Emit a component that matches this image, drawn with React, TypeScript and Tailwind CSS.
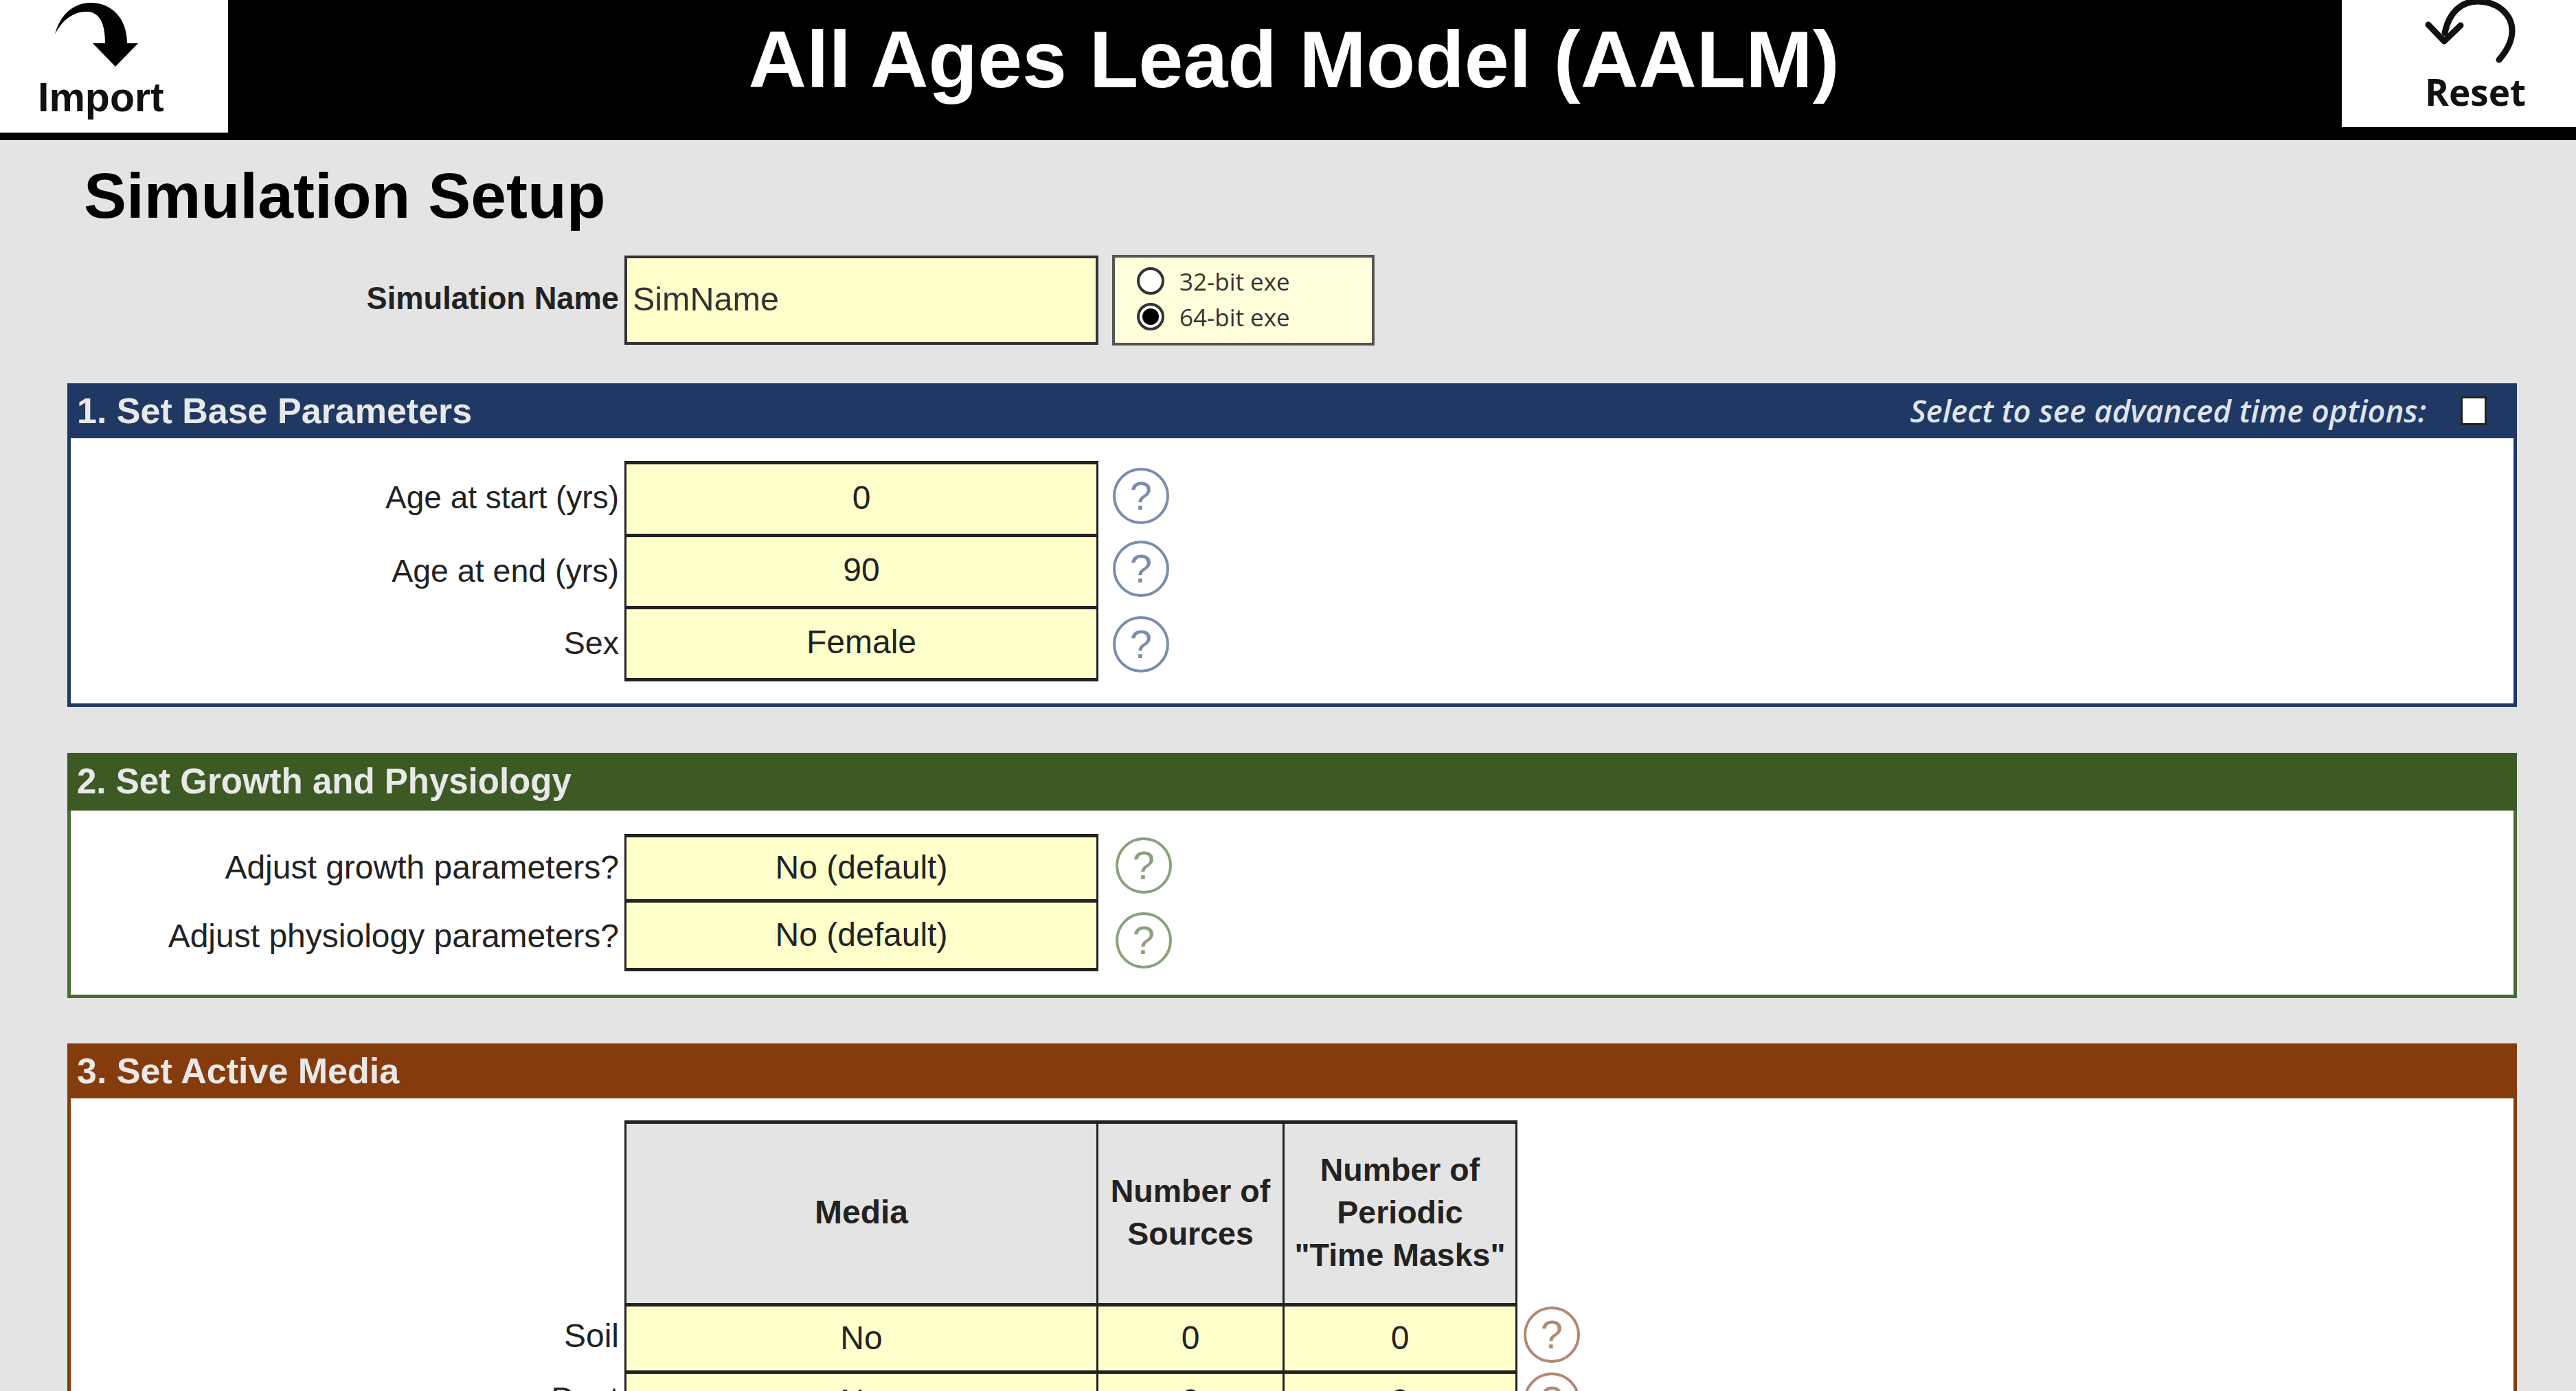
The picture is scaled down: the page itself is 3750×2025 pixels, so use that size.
const sans = "font-['Liberation_Sans',Arial,sans-serif]";

function HelpIcon({ color, className }: { color: string; className?: string }) {
  return (
    <svg className={`shrink-0 ${className ?? ''}`} width="84" height="84" viewBox="0 0 84 84" fill="none">
      <circle cx="42" cy="42" r="39" stroke={color} strokeWidth="4" />
      <text x="42" y="62" textAnchor="middle" fontSize="58" fontFamily="Liberation Sans, Arial, sans-serif" fill={color}>?</text>
    </svg>
  );
}

function InputRow({ label, value, color, height, top, labelSize, textPad, iconClass }: { label: string; value: string; color: string; height: string; top?: boolean; labelSize: string; textPad: string; iconClass: string }) {
  return (
    <div className={`flex items-center ${height}`}>
      <div className={`w-[811px] pr-[8px] text-right text-[#222] ${labelSize} ${textPad}`}>{label}</div>
      <div className={`flex h-full w-[690px] items-center justify-center border-x-[3px] border-b-[5px] border-[#222] bg-[#ffffcc] text-[48px] text-[#222] ${textPad} ${top ? 'border-t-[5px]' : ''}`}>
        {value}
      </div>
      <HelpIcon color={color} className={iconClass} />
    </div>
  );
}

function SectionHeader({ title, bg, size, children }: { title: string; bg: string; size: string; children?: React.ReactNode }) {
  return (
    <div className={`flex items-center justify-between pl-[14px] pr-[44px] font-bold text-[#e8e8e8] ${bg} ${size}`}>
      <span>{title}</span>
      {children}
    </div>
  );
}

function MediaRow({ label, media, sources, masks, textClass, iconClass }: { label: string; media: string; sources: string; masks: string; textClass: string; iconClass: string }) {
  return (
    <div className="flex">
      <div className={`flex w-[811px] items-center justify-end pr-[8px] text-[48px] text-[#222] ${textClass}`}>{label}</div>
      <div className="grid w-[1300px] grid-cols-[687px_271px_336px] border-x-[3px] border-t-[5px] border-[#222] bg-[#ffffcc] text-center text-[48px] text-[#222]">
        <div className={`flex h-[93px] items-center justify-center border-r-[3px] border-[#222] ${textClass}`}>{media}</div>
        <div className={`flex h-[93px] items-center justify-center border-r-[3px] border-[#222] ${textClass}`}>{sources}</div>
        <div className={`flex h-[93px] items-center justify-center ${textClass}`}>{masks}</div>
      </div>
      <HelpIcon color="#b08a72" className={iconClass} />
    </div>
  );
}

export default function App() {
  return (
    <div className={`h-[2025px] w-[3750px] overflow-hidden bg-[#e4e4e4] ${sans}`}>
      {/* Title bar */}
      <header className="flex h-[204px] items-start justify-between bg-black">
        <div className="flex h-[193px] w-[332px] flex-col bg-white">
          <svg width="140" height="100" viewBox="0 0 140 100" className="ml-[70px]">
            <path d="M10 50 C18 20 38 4 62 4 C92 4 115 26 115 63 L131 63 L98 97 L65 63 L83 63 C83 36 76 17 56 17 C36 17 20 30 10 50 Z" fill="#000" />
          </svg>
          <span className="mt-[13px] ml-[55px] text-[59px] font-bold leading-none text-[#111]">Import</span>
        </div>
        <h1 className="mt-[28px] ml-[26px] text-[117px] font-bold leading-none text-white">All Ages Lead Model (AALM)</h1>
        <div className="flex h-[185px] w-[341px] flex-col bg-white">
          <svg width="140" height="96" viewBox="0 0 140 96" fill="none" stroke="#111" strokeWidth="9" strokeLinecap="round" strokeLinejoin="round" className="ml-[116px]">
            <path d="M113 87 C126 72 132 58 132 45 C132 20 110 2 82 2 C58 2 40 18 34 48" />
            <path d="M10 36 L33 60 L57 37" />
          </svg>
          <span className="mt-[11px] ml-[121px] font-['Open_Sans',sans-serif] text-[53px] font-bold leading-none text-[#111]">Reset</span>
        </div>
      </header>

      <main className="pl-[98px] pr-[86px]">
        <h2 className="pt-[35px] pl-[24px] text-[93px] font-bold leading-none text-black">Simulation Setup</h2>

        {/* Simulation name */}
        <div className="mt-[39px] flex items-center">
          <div className="w-[811px] pr-[8px] pb-[4px] text-right text-[45.3px] font-bold text-[#222]">Simulation Name</div>
          <div className="flex h-[130px] w-[690px] items-center border-[4px] border-[#333] bg-[#ffffcc] pb-[4px] pl-[8px] text-[48.5px] text-[#333]">SimName</div>
          <div className="ml-[20px] flex h-[132px] w-[382px] flex-col justify-center gap-[12px] border-[4px] border-[#555] bg-[#ffffdc] pb-[4px] pl-[32px] font-['Open_Sans',sans-serif] text-[35px] leading-none text-[#333]">
            <div className="flex items-center gap-[22px]">
              <span className="h-[40px] w-[40px] rounded-full border-[4px] border-[#333] bg-white" />
              <span>32-bit exe</span>
            </div>
            <div className="flex items-center gap-[22px]">
              <span className="flex h-[40px] w-[40px] items-center justify-center rounded-full border-[4px] border-[#333] bg-white">
                <span className="h-[24px] w-[24px] rounded-full bg-black" />
              </span>
              <span>64-bit exe</span>
            </div>
          </div>
        </div>

        {/* Section 1 */}
        <section className="mt-[55px] h-[471px] border-[5px] border-t-0 border-[#1f3864] bg-white">
          <div className="mx-[-5px]">
            <SectionHeader title="1. Set Base Parameters" bg="bg-[#1f3864]" size="h-[80px] text-[52px]">
              <div className="flex items-center gap-[50px]">
                <span className="font-['Open_Sans',sans-serif] text-[45.3px] font-semibold italic text-[#dfe3ea]">Select to see advanced time options:</span>
                <span className="h-[42px] w-[38px] border-[3px] border-[#222] bg-white" />
              </div>
            </SectionHeader>
          </div>
          <div className="mx-[-5px] pt-[33px]">
            <InputRow label="Age at start (yrs)" value="0" color="#7a8dad" height="h-[111px]" labelSize="text-[46px]" textPad="pb-[4px]" iconClass="ml-[20px] -translate-y-[5px]" top />
            <InputRow label="Age at end (yrs)" value="90" color="#7a8dad" height="h-[105px]" labelSize="text-[46.5px]" textPad="pb-[5px]" iconClass="ml-[20px] -translate-y-[7px]" />
            <InputRow label="Sex" value="Female" color="#7a8dad" height="h-[105px]" labelSize="text-[46.5px]" textPad="pb-[5px]" iconClass="ml-[20px] -translate-y-[2px]" />
          </div>
        </section>

        {/* Section 2 */}
        <section className="mt-[67px] h-[357px] border-[5px] border-t-0 border-[#4a6b32] bg-white">
          <div className="mx-[-5px]">
            <SectionHeader title="2. Set Growth and Physiology" bg="bg-[#3d5a24]" size="h-[84px] text-[51px]" />
          </div>
          <div className="mx-[-5px] pt-[34px]">
            <InputRow label="Adjust growth parameters?" value="No (default)" color="#8aa27c" height="h-[100px]" labelSize="text-[48px]" textPad="pb-[2px]" iconClass="ml-[24px] -translate-y-[4px]" top />
            <InputRow label="Adjust physiology parameters?" value="No (default)" color="#8aa27c" height="h-[100px]" labelSize="text-[48px]" textPad="pb-[2px]" iconClass="ml-[24px] translate-y-[5px]" />
          </div>
        </section>

        {/* Section 3 */}
        <section className="mt-[66px] h-[600px] border-x-[5px] border-[#843c0c] bg-white">
          <div className="mx-[-5px]">
            <SectionHeader title="3. Set Active Media" bg="bg-[#843c0c]" size="h-[80px] text-[52px]" />
          </div>
          <div className="mx-[-5px] pt-[32px]">
            <div className="ml-[811px] grid w-[1300px] grid-cols-[687px_271px_336px] border-x-[3px] border-t-[5px] border-[#222] text-center text-[#222]">
              <div className="flex h-[261px] items-center justify-center border-r-[3px] border-[#222] bg-[#e4e4e4] pb-[3px] text-[48px] font-bold">Media</div>
              <div className="flex h-[261px] items-center justify-center border-r-[3px] border-[#222] bg-[#e4e4e4] pb-[3px] text-[46.5px] font-bold leading-[62px]">Number of<br />Sources</div>
              <div className="flex h-[261px] items-center justify-center bg-[#e4e4e4] pb-[3px] text-[46.5px] font-bold leading-[62px]">Number of<br />Periodic<br />"Time Masks"</div>
            </div>
            <MediaRow label="Soil" media="No" sources="0" masks="0" textClass="pb-[2px]" iconClass="ml-[8px] translate-y-[4px]" />
            <MediaRow label="Dust" media="No" sources="0" masks="0" textClass="pb-[14px]" iconClass="ml-[8px] translate-y-[2px]" />
          </div>
        </section>
      </main>
    </div>
  );
}
